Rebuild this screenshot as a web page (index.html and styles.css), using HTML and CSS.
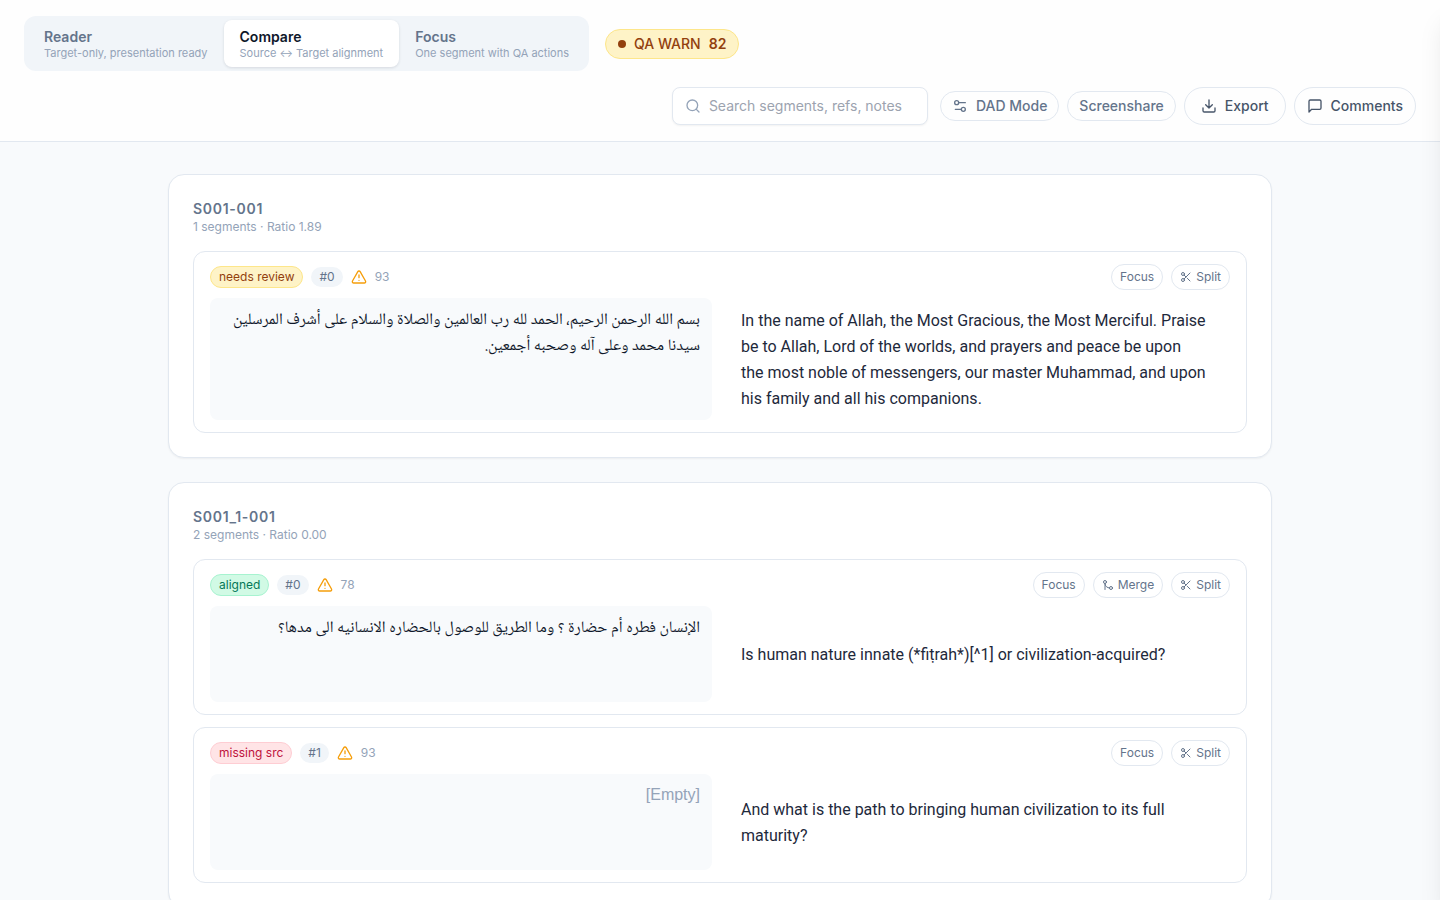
FILE: index.html
```html
<!DOCTYPE html>
<html lang="en">
<head>
<meta charset="utf-8">
<meta name="viewport" content="width=device-width, initial-scale=1">
<title>Compare segments</title>
<link rel="stylesheet" href="styles.css">
</head>
<body>
<svg class="sprite" aria-hidden="true">
  <symbol id="scissors" viewBox="0 0 24 24"><circle cx="6" cy="6" r="3"/><path d="M8.12 8.12 12 12M20 4 8.12 15.88"/><circle cx="6" cy="18" r="3"/><path d="M14.8 14.8 20 20"/></symbol>
  <symbol id="merge" viewBox="0 0 24 24"><circle cx="18" cy="18" r="3"/><circle cx="6" cy="6" r="3"/><path d="M6 21V9a9 9 0 0 0 9 9"/></symbol>
  <symbol id="alert" viewBox="0 0 24 24"><path d="m21.73 18-8-14a2 2 0 0 0-3.48 0l-8 14A2 2 0 0 0 4 21h16a2 2 0 0 0 1.73-3"/><path d="M12 9v4M12 17h.01"/></symbol>
</svg>
<header class="topbar">
  <div class="topbar-row">
    <nav class="modes" aria-label="View mode">
      <button class="mode" type="button"><span class="mode-title">Reader</span><span class="mode-sub">Target-only, presentation ready</span></button>
      <button class="mode mode-active" type="button" aria-pressed="true"><span class="mode-title">Compare</span><span class="mode-sub">Source <span class="arrow">↔</span> Target alignment</span></button>
      <button class="mode" type="button"><span class="mode-title">Focus</span><span class="mode-sub">One segment with QA actions</span></button>
    </nav>
    <button class="qa" type="button"><span class="dot"></span><span>QA WARN</span><strong>82</strong></button>
  </div>
  <div class="topbar-row tools">
    <label class="search">
      <svg class="icon icon-16" viewBox="0 0 24 24" aria-hidden="true"><circle cx="11" cy="11" r="8"/><path d="m21 21-4.3-4.3"/></svg>
      <input type="text" aria-label="Search segments" placeholder="Search segments, refs, notes">
    </label>
    <div class="actions">
      <button class="pill" type="button"><svg class="icon icon-16" viewBox="0 0 24 24" aria-hidden="true"><path d="M20 7h-9M14 17H5"/><circle cx="17" cy="17" r="3"/><circle cx="7" cy="7" r="3"/></svg>DAD Mode</button>
      <button class="pill" type="button">Screenshare</button>
      <button class="pill pill-lg pill-export" type="button"><svg class="icon icon-16" viewBox="0 0 24 24" aria-hidden="true"><path d="M21 15v4a2 2 0 0 1-2 2H5a2 2 0 0 1-2-2v-4M7 10l5 5 5-5M12 15V3"/></svg>Export</button>
      <button class="pill pill-lg" type="button"><svg class="icon icon-16" viewBox="0 0 24 24" aria-hidden="true"><path d="M21 15a2 2 0 0 1-2 2H7l-4 4V5a2 2 0 0 1 2-2h14a2 2 0 0 1 2 2z"/></svg>Comments</button>
    </div>
  </div>
</header>
<main class="content">
  <section class="group">
    <header class="group-head"><h2>S001-001</h2><p>1 segments · Ratio 1.89</p></header>
    <article class="segment">
      <div class="segment-bar">
        <span class="badge badge-review">needs review</span><span class="index">#0</span>
        <span class="score"><svg class="icon icon-16" aria-hidden="true"><use href="#alert"/></svg>93</span>
        <div class="segment-actions">
          <button class="chip" type="button">Focus</button>
          <button class="chip" type="button"><svg class="icon icon-12" aria-hidden="true"><use href="#scissors"/></svg>Split</button>
        </div>
      </div>
      <div class="pair">
        <p class="source" lang="ar" dir="rtl">بسم الله الرحمن الرحيم، الحمد لله رب العالمين والصلاة والسلام على أشرف المرسلين سيدنا محمد وعلى آله وصحبه أجمعين.</p>
        <p class="target"><span>In the name of Allah, the Most Gracious, the Most Merciful. Praise be to Allah, Lord of the worlds, and prayers and peace be upon<br>the most noble of messengers, our master Muhammad, and upon<br>his family and all his companions.</span></p>
      </div>
    </article>
  </section>
  <section class="group">
    <header class="group-head"><h2>S001_1-001</h2><p>2 segments · Ratio 0.00</p></header>
    <article class="segment">
      <div class="segment-bar">
        <span class="badge badge-aligned">aligned</span><span class="index">#0</span>
        <span class="score"><svg class="icon icon-16" aria-hidden="true"><use href="#alert"/></svg>78</span>
        <div class="segment-actions">
          <button class="chip" type="button">Focus</button>
          <button class="chip" type="button"><svg class="icon icon-12" aria-hidden="true"><use href="#merge"/></svg>Merge</button>
          <button class="chip" type="button"><svg class="icon icon-12" aria-hidden="true"><use href="#scissors"/></svg>Split</button>
        </div>
      </div>
      <div class="pair">
        <p class="source" lang="ar" dir="rtl">الإنسان فطره أم حضارة ؟ وما الطريق للوصول بالحضاره الانسانيه الى مدها؟</p>
        <p class="target">Is human nature innate (*fiṭrah*)[^1] or civilization-acquired?</p>
      </div>
    </article>
    <article class="segment">
      <div class="segment-bar">
        <span class="badge badge-missing">missing src</span><span class="index">#1</span>
        <span class="score"><svg class="icon icon-16" aria-hidden="true"><use href="#alert"/></svg>93</span>
        <div class="segment-actions">
          <button class="chip" type="button">Focus</button>
          <button class="chip" type="button"><svg class="icon icon-12" aria-hidden="true"><use href="#scissors"/></svg>Split</button>
        </div>
      </div>
      <div class="pair">
        <p class="source source-empty">[Empty]</p>
        <p class="target">And what is the path to bringing human civilization to its full maturity?</p>
      </div>
    </article>
  </section>
</main>
<aside class="drawer" aria-hidden="true"></aside>
</body>
</html>
```
FILE: styles.css
```css
* { box-sizing: border-box; }
body {
  margin: 0;
  height: 100vh;
  display: flex;
  flex-direction: column;
  overflow: hidden;
  background: #f8fafc;
  color: #0f172a;
  font-family: Inter, "Liberation Sans", sans-serif;
  font-size: 14px;
  line-height: 20px;
}
button, input { font: inherit; color: inherit; }
button { background: none; border: 0; margin: 0; cursor: pointer; white-space: nowrap; }
h2, p { margin: 0; }
.sprite { display: none; }
.icon { fill: none; stroke: currentColor; stroke-width: 2; stroke-linecap: round; stroke-linejoin: round; flex: none; }
.icon-16 { width: 16px; height: 16px; }
.icon-12 { width: 12px; height: 12px; }

.topbar {
  flex: none;
  display: flex;
  flex-direction: column;
  gap: 16px;
  padding: 16px 24px;
  background: #fefefe;
  border-bottom: 1px solid #e2e8f0;
}
.topbar-row { display: flex; align-items: center; gap: 16px; }
.tools { justify-content: flex-end; gap: 12px; }
.modes { display: flex; padding: 4px; border-radius: 12px; background: #f1f5f9; }
.mode {
  display: flex;
  flex-direction: column;
  align-items: flex-start;
  padding: 8px 16px 6px;
  border-radius: 8px;
  color: #64748b;
}
.mode-active { background: #fff; color: #0f172a; box-shadow: 0 1px 3px rgba(15, 23, 42, .12); }
.mode-title { font-weight: 600; line-height: 18px; }
.mode-sub { font-size: 11px; line-height: 15px; color: #94a3b8; }
.arrow { font-size: 10px; line-height: 1; }
.qa {
  display: flex;
  align-items: center;
  gap: 8px;
  padding: 4px 12px;
  border: 1px solid #fde68a;
  border-radius: 15px;
  background: #fef3c7;
  color: #92400e;
  font-weight: 500;
}
.qa strong { font-weight: 600; }
.dot { width: 8px; height: 8px; border-radius: 4px; background: #92400e; }
.search {
  display: flex;
  align-items: center;
  gap: 8px;
  width: 256px;
  height: 38px;
  padding: 0 12px;
  border: 1px solid #e2e8f0;
  border-radius: 8px;
  background: #fff;
  color: #94a3b8;
  box-shadow: 0 1px 2px rgba(0, 0, 0, .05);
}
.search input { flex: 1; min-width: 0; padding: 0; border: 0; outline: 0; background: none; color: #0f172a; }
.search input::placeholder { color: #9ca3af; opacity: 1; }
.actions { display: flex; align-items: center; gap: 8px; }
.pill {
  display: flex;
  align-items: center;
  gap: 8px;
  padding: 4px 11px;
  border: 1px solid #e2e8f0;
  border-radius: 19px;
  color: #64748b;
  font-weight: 500;
}
.pill-lg { padding: 8px 12px; color: #475569; }
.pill-export { padding: 8px 16px; }

.content {
  flex: 1;
  min-height: 0;
  width: 100%;
  max-width: 1152px;
  margin: 0 auto;
  padding: 32px 24px;
  overflow: hidden;
}
.group {
  margin-bottom: 24px;
  padding: 24px;
  border: 1px solid #e2e8f0;
  border-radius: 16px;
  background: #fff;
  box-shadow: 0 1px 2px rgba(0, 0, 0, .05);
}
.group-head { margin-bottom: 16px; }
.group-head h2 { font-size: 14px; line-height: 20px; font-weight: 600; color: #64748b; letter-spacing: .05em; }
.group-head p { font-size: 12px; line-height: 16px; color: #94a3b8; }
.segment { padding: 12px 16px; border: 1px solid #e2e8f0; border-radius: 12px; }
.segment + .segment { margin-top: 12px; }
.segment-bar { display: flex; align-items: center; gap: 8px; margin-bottom: 8px; font-size: 12px; line-height: 16px; }
.badge { padding: 2px 8px; border: 1px solid; border-radius: 11px; }
.badge-review { background: #fef3c7; border-color: #fde68a; color: #92400e; }
.badge-aligned { background: #d1fae5; border-color: #a7f3d0; color: #047857; }
.badge-missing { background: #ffe4e6; border-color: #fecdd3; color: #be123c; }
.index { padding: 2px 8px; border-radius: 10px; background: #f1f5f9; color: #64748b; }
.score { display: flex; align-items: center; gap: 8px; color: #94a3b8; }
.score .icon { color: #f59e0b; }
.segment-actions { display: flex; gap: 8px; margin-left: auto; }
.chip {
  display: flex;
  align-items: center;
  gap: 4px;
  padding: 4px 8px;
  border: 1px solid #e2e8f0;
  border-radius: 13px;
  color: #64748b;
}
.pair { display: grid; grid-template-columns: 1fr 1fr; gap: 16px; }
.source, .target { min-height: 96px; font-size: 16px; line-height: 26px; }
.source {
  padding: 10px 12px 6px;
  border-radius: 8px;
  background: #f8fafc;
  font-family: "Noto Naskh Arabic", "Geeza Pro", "Liberation Serif", serif;
}
.source-empty { padding: 8px 12px; text-align: right; color: #94a3b8; font-family: "Liberation Sans", sans-serif; }
.target { display: flex; align-items: center; padding: 10px 13px 8px; color: #1e293b; font-family: Roboto, sans-serif; }
.drawer {
  position: fixed;
  top: 0;
  bottom: 0;
  left: 100%;
  width: 384px;
  background: #fff;
  box-shadow: 0 20px 25px -5px rgba(0, 0, 0, .1), 0 8px 10px -6px rgba(0, 0, 0, .1);
}
```
